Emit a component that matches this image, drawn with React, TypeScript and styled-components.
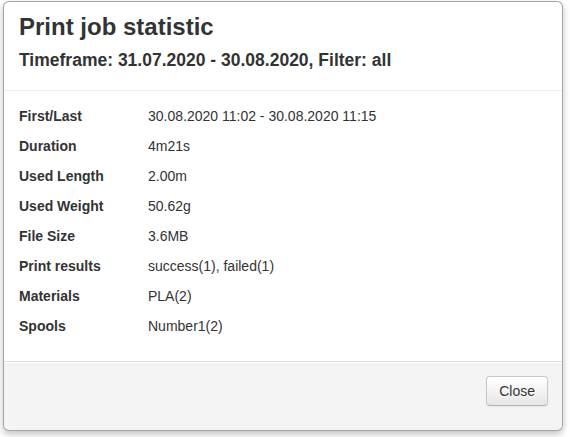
import React from "react";
import styled, { createGlobalStyle } from "styled-components";

const GlobalStyle = createGlobalStyle`
  html, body {
    margin: 0;
    padding: 0;
    background: #ffffff;
  }
  body {
    font-family: "Liberation Sans", Arial, Helvetica, sans-serif;
    font-size: 14px;
    line-height: 20px;
    color: #333333;
  }
`;

const Page = styled.div`
  width: 570px;
  height: 437px;
  padding: 1px 0 0 3px;
  box-sizing: border-box;
  overflow: hidden;
`;

const Modal = styled.div`
  width: 560px;
  box-sizing: border-box;
  background: #ffffff;
  border: 1px solid rgba(0, 0, 0, 0.35);
  border-radius: 6px;
  box-shadow: 0 3px 7px rgba(0, 0, 0, 0.25);
  display: flex;
  flex-direction: column;
`;

const Header = styled.div`
  padding: 10px 15px 20px;
  border-bottom: 1px solid #eeeeee;
`;

const Title = styled.h3`
  margin: 0;
  font-size: 24px;
  line-height: 30px;
  font-weight: bold;
  color: #333333;
`;

const Subtitle = styled.h4`
  margin: 8px 0 0;
  font-size: 17.5px;
  line-height: 20px;
  font-weight: bold;
  color: #333333;
`;

const Body = styled.div`
  padding: 15px 15px 25px;
`;

const StatsGrid = styled.dl`
  margin: 0;
  display: grid;
  grid-template-columns: 129px 1fr;
  row-gap: 10px;
`;

const Label = styled.dt`
  font-weight: bold;
  line-height: 20px;
  margin: 0;
`;

const Value = styled.dd`
  margin: 0;
  line-height: 20px;
`;

const Footer = styled.div`
  display: flex;
  justify-content: flex-end;
  padding: 14px 14px 24px;
  background: #f4f4f4;
  border-top: 1px solid #dddddd;
  border-radius: 0 0 6px 6px;
  box-shadow: inset 0 1px 0 #ffffff;
`;

const Button = styled.button`
  font-family: "Liberation Sans", Arial, Helvetica, sans-serif;
  font-size: 14px;
  line-height: 20px;
  color: #333333;
  padding: 4px 12px;
  border: 1px solid #c8c8c8;
  border-bottom-color: #b3b3b3;
  border-radius: 4px;
  background: linear-gradient(to bottom, #ffffff, #e6e6e6);
  box-shadow: inset 0 1px 0 rgba(255, 255, 255, 0.2), 0 1px 2px rgba(0, 0, 0, 0.05);
  text-shadow: 0 1px 1px rgba(255, 255, 255, 0.75);
  cursor: pointer;
`;

const stats: [string, string][] = [
  ["First/Last", "30.08.2020 11:02 - 30.08.2020 11:15"],
  ["Duration", "4m21s"],
  ["Used Length", "2.00m"],
  ["Used Weight", "50.62g"],
  ["File Size", "3.6MB"],
  ["Print results", "success(1), failed(1)"],
  ["Materials", "PLA(2)"],
  ["Spools", "Number1(2)"],
];

export default function App() {
  return (
    <>
      <GlobalStyle />
      <Page>
        <Modal>
          <Header>
            <Title>Print job statistic</Title>
            <Subtitle>Timeframe: 31.07.2020 - 30.08.2020, Filter: all</Subtitle>
          </Header>
          <Body>
            <StatsGrid>
              {stats.map(([label, value]) => (
                <React.Fragment key={label}>
                  <Label>{label}</Label>
                  <Value>{value}</Value>
                </React.Fragment>
              ))}
            </StatsGrid>
          </Body>
          <Footer>
            <Button>Close</Button>
          </Footer>
        </Modal>
      </Page>
    </>
  );
}
